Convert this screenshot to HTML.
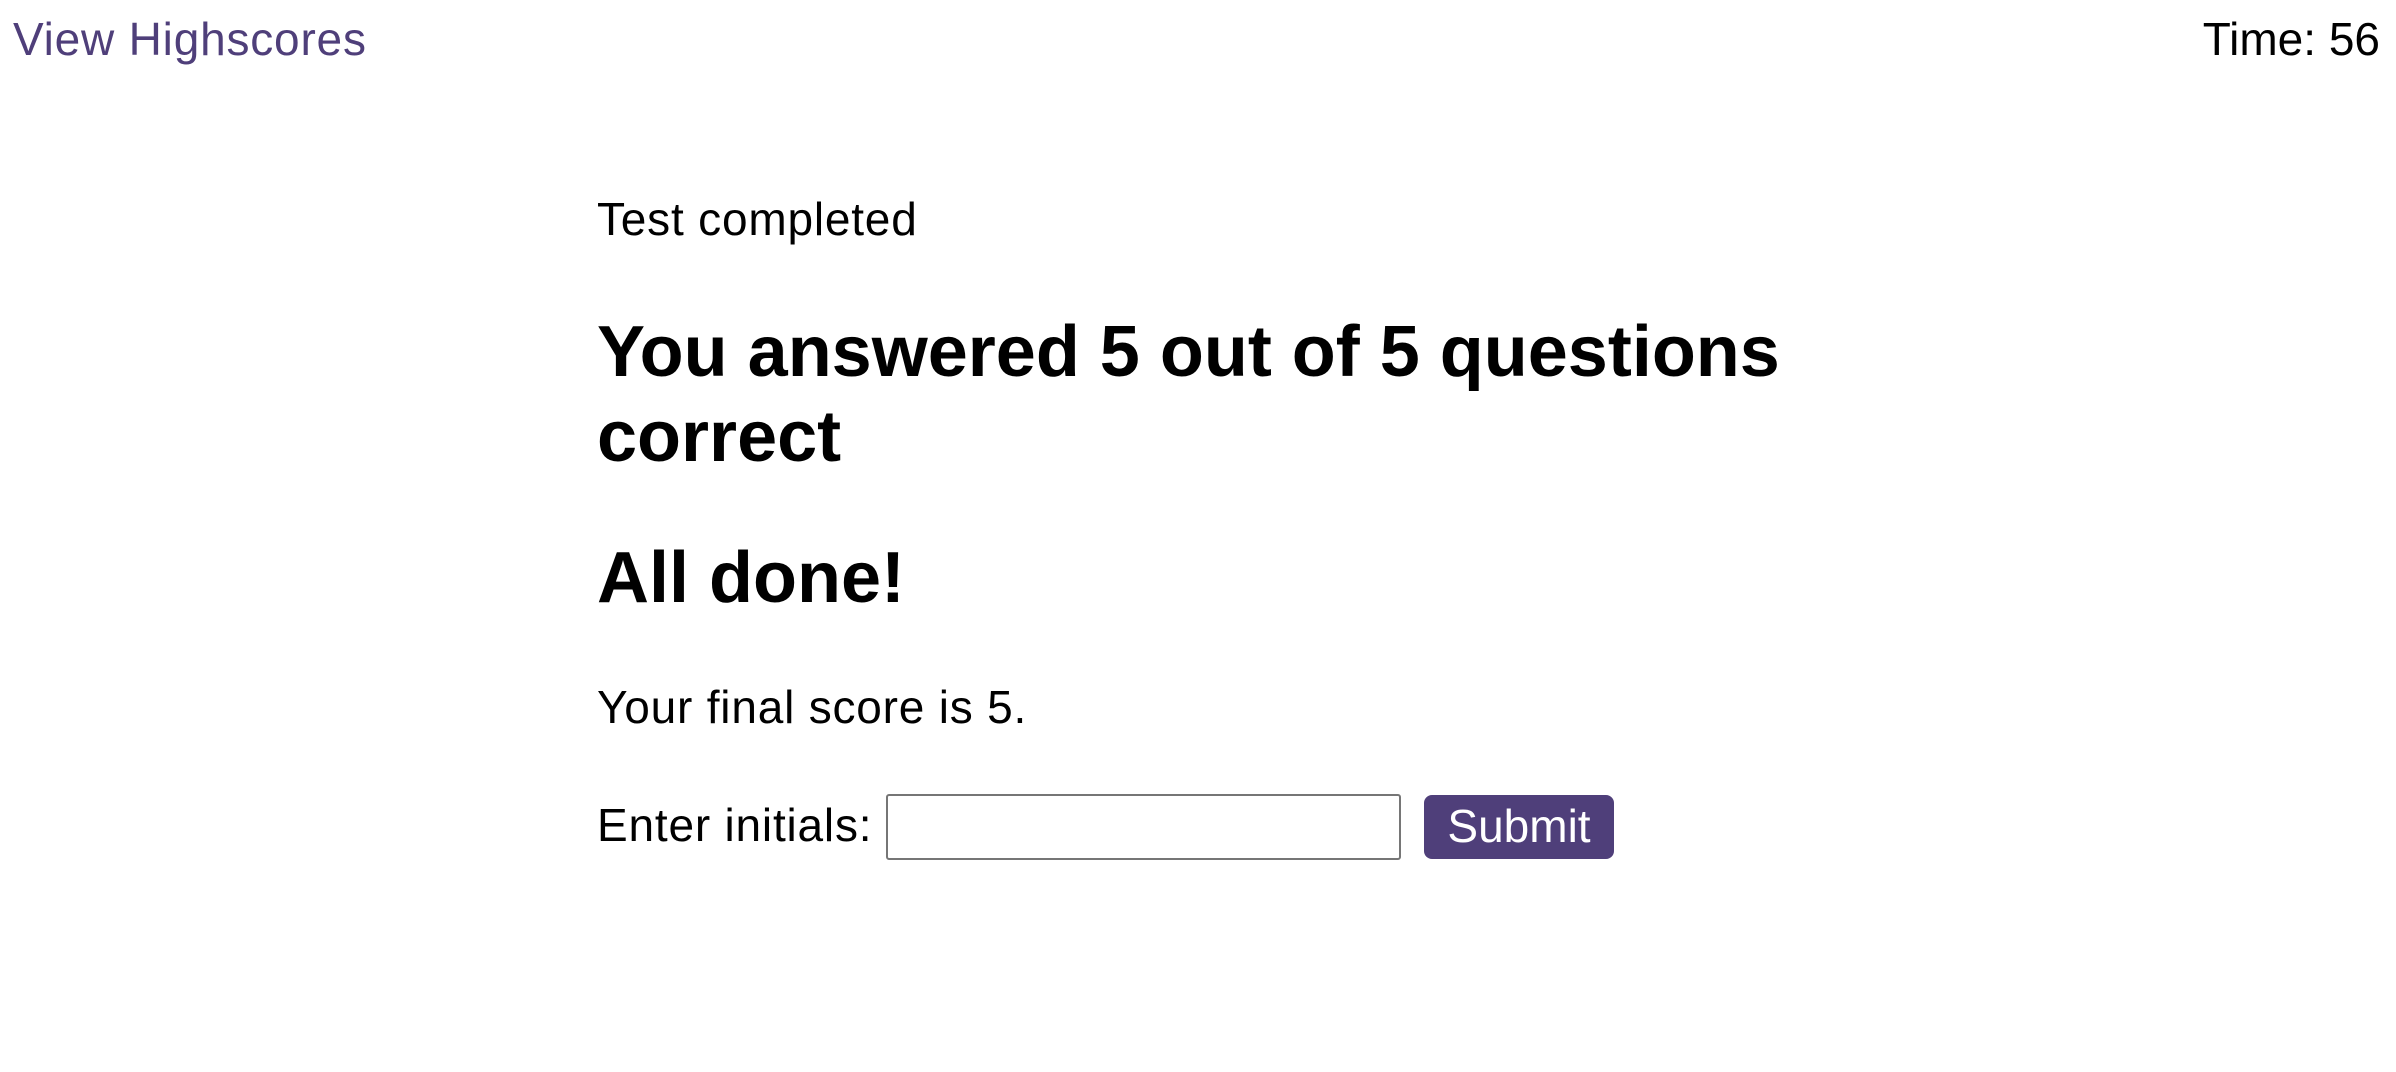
<!DOCTYPE html>
<html><head><meta charset="utf-8"><style>
html,body{margin:0;padding:0;width:2396px;height:1072px;background:#fff;overflow:hidden;font-family:"Liberation Sans",Arial,sans-serif;color:#000}
.a{position:absolute;line-height:1;white-space:nowrap}
.hl{color:#4f3f7a;font-size:46px;left:13px;top:16px;letter-spacing:0.8px}
.tm{font-size:46px;right:16px;top:16px}
.p{font-size:46px;left:597px;letter-spacing:0.8px}
.h{font-size:72px;font-weight:bold;left:597px}
.inp{position:absolute;left:886px;top:794px;width:511px;height:62px;border:2px solid #767676;border-radius:3px;box-sizing:content-box}
.btn{position:absolute;left:1424px;top:795px;width:190px;height:64px;background:#4f3f7a;border-radius:8px;color:#fff;font-size:46px;line-height:62px;text-align:center}
</style></head><body>
<div class="a hl">View Highscores</div>
<div class="a tm">Time: 56</div>
<div class="a p" style="top:196px">Test completed</div>
<div class="a h" style="line-height:85px;top:310px">You answered 5 out of 5 questions<br>correct</div>
<div class="a h" style="top:542px">All done!</div>
<div class="a p" style="top:684px">Your final score is 5.</div>
<div class="a p" style="top:802px">Enter initials:</div>
<div class="inp"></div>
<div class="btn">Submit</div>
</body></html>
